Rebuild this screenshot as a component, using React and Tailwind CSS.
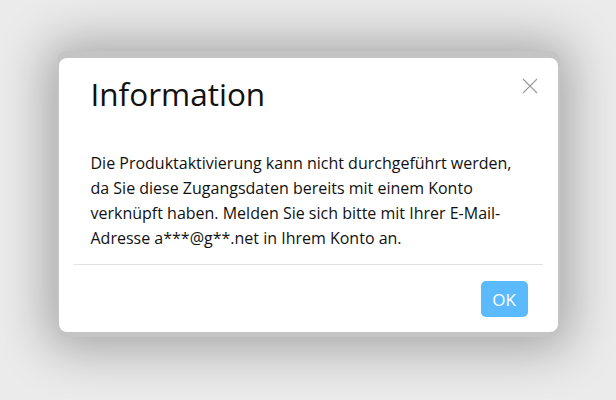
import React from 'react';

export default function App() {
  return (
    <div className="min-h-screen bg-[#ebebeb] flex justify-center pt-[51px]" style={{ fontFamily: '"Open Sans", "Noto Sans", sans-serif' }}>
      {/* outer translucent frame with the big soft shadow */}
      <div className="self-start rounded-[10px] bg-[#c4c4c4] pt-[7px] px-[2px] pb-[5px] shadow-[0_2px_50px_10px_rgba(0,0,0,0.3)]">
        <div className="relative w-[499px] bg-white rounded-[8px]">
          <div className="pt-[17px] px-[32px]">
            <h2 className="text-[31.5px] leading-[38px] font-normal text-[#111]">Information</h2>
          </div>
          <button type="button" className="absolute top-[20px] right-[20px] w-[16px] h-[16px]" aria-label="close">
            <svg width="16" height="16" viewBox="0 0 16 16" fill="none">
              <path d="M1 1L15 15M15 1L1 15" stroke="#9a9a9a" strokeWidth="1.1" />
            </svg>
          </button>
          <p className="mt-[38px] px-[32px] text-[16px] leading-[25px] text-[#111]">
            Die Produktaktivierung kann nicht durchgeführt werden, da Sie diese Zugangsdaten bereits mit einem Konto verknüpft haben. Melden Sie sich bitte mit Ihrer E-Mail-Adresse a***@g**.net in Ihrem Konto an.
          </p>
          <div className="mx-[15px] mt-[13px] h-px bg-[#e0e0e6]" />
          <div className="flex justify-end pt-[16px] pb-[15px] pr-[30px]">
            <button type="button" className="w-[47px] h-[36px] rounded-[5px] bg-[#5bbafc] text-white text-[17px] leading-none">
              OK
            </button>
          </div>
        </div>
      </div>
    </div>
  );
}
